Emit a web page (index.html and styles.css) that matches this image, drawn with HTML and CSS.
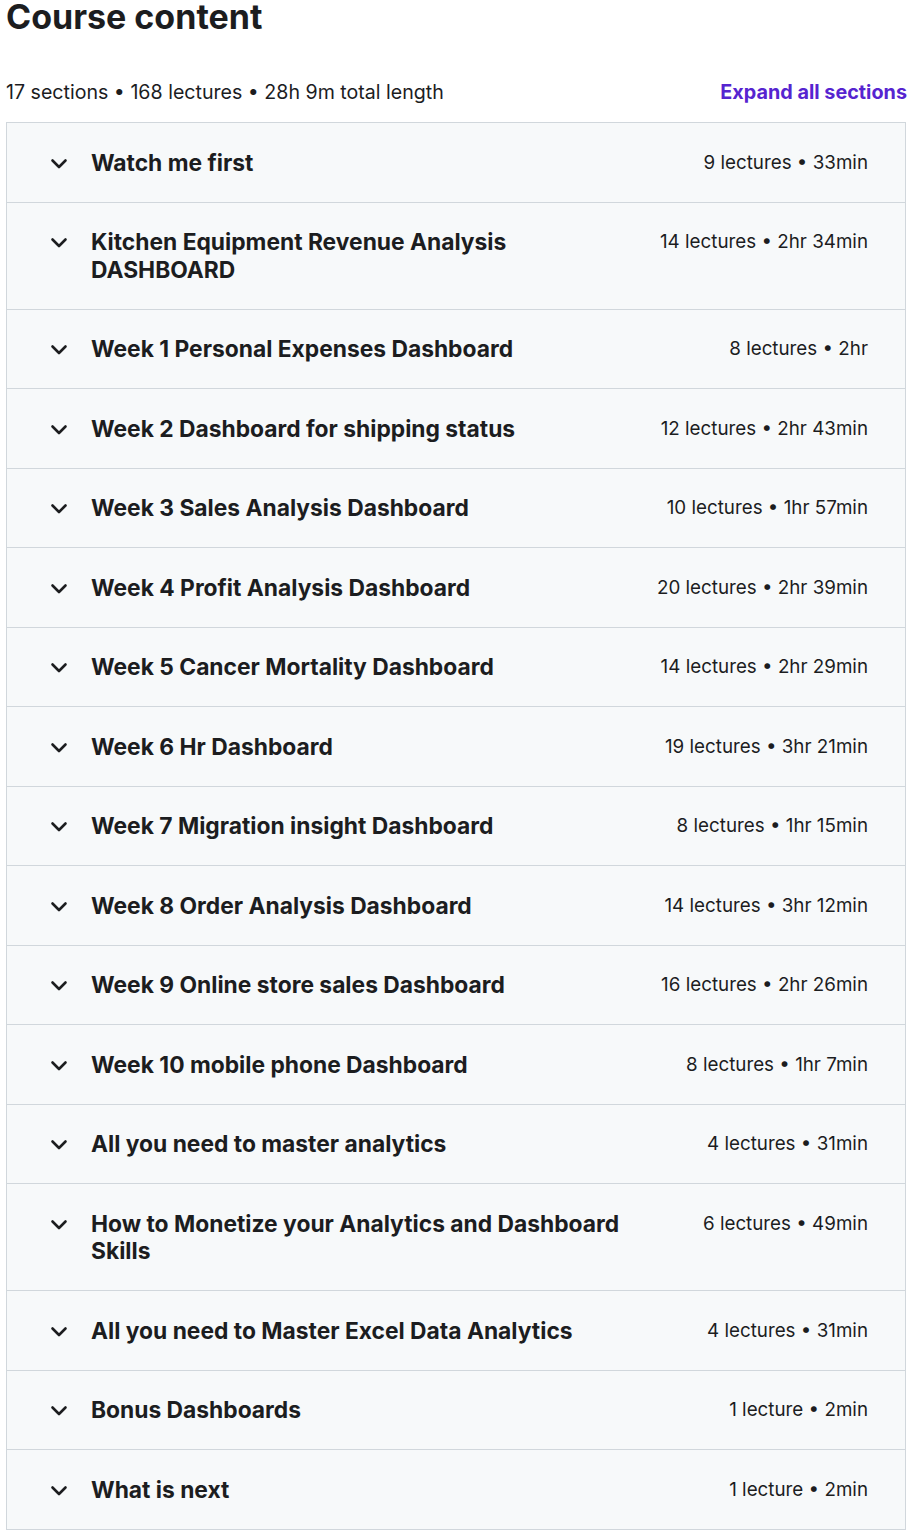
FILE: index.html
```html
<!DOCTYPE html>
<html lang="en">
<head>
<meta charset="utf-8">
<title>Course content</title>
<link rel="stylesheet" href="styles.css">
</head>
<body>
<div class="course">
  <h2 class="title">Course content</h2>
  <div class="summary">
    <span class="stats">17 sections • 168 lectures • 28h 9m total length</span>
    <button class="expand">Expand all sections</button>
  </div>
  <div class="sections">
    <div class="row"><svg class="chev" viewBox="0 0 24 24"><path d="M5.5 9.5l6.5 6.5 6.5-6.5"/></svg><span class="name">Watch me first</span><span class="meta">9 lectures • 33min</span></div>
    <div class="row"><svg class="chev" viewBox="0 0 24 24"><path d="M5.5 9.5l6.5 6.5 6.5-6.5"/></svg><span class="name">Kitchen Equipment Revenue Analysis DASHBOARD</span><span class="meta">14 lectures • 2hr 34min</span></div>
    <div class="row"><svg class="chev" viewBox="0 0 24 24"><path d="M5.5 9.5l6.5 6.5 6.5-6.5"/></svg><span class="name">Week 1 Personal Expenses Dashboard</span><span class="meta">8 lectures • 2hr</span></div>
    <div class="row"><svg class="chev" viewBox="0 0 24 24"><path d="M5.5 9.5l6.5 6.5 6.5-6.5"/></svg><span class="name">Week 2 Dashboard for shipping status</span><span class="meta">12 lectures • 2hr 43min</span></div>
    <div class="row"><svg class="chev" viewBox="0 0 24 24"><path d="M5.5 9.5l6.5 6.5 6.5-6.5"/></svg><span class="name">Week 3 Sales Analysis Dashboard</span><span class="meta">10 lectures • 1hr 57min</span></div>
    <div class="row"><svg class="chev" viewBox="0 0 24 24"><path d="M5.5 9.5l6.5 6.5 6.5-6.5"/></svg><span class="name">Week 4 Profit Analysis Dashboard</span><span class="meta">20 lectures • 2hr 39min</span></div>
    <div class="row"><svg class="chev" viewBox="0 0 24 24"><path d="M5.5 9.5l6.5 6.5 6.5-6.5"/></svg><span class="name">Week 5 Cancer Mortality Dashboard</span><span class="meta">14 lectures • 2hr 29min</span></div>
    <div class="row"><svg class="chev" viewBox="0 0 24 24"><path d="M5.5 9.5l6.5 6.5 6.5-6.5"/></svg><span class="name">Week 6 Hr Dashboard</span><span class="meta">19 lectures • 3hr 21min</span></div>
    <div class="row"><svg class="chev" viewBox="0 0 24 24"><path d="M5.5 9.5l6.5 6.5 6.5-6.5"/></svg><span class="name">Week 7 Migration insight Dashboard</span><span class="meta">8 lectures • 1hr 15min</span></div>
    <div class="row"><svg class="chev" viewBox="0 0 24 24"><path d="M5.5 9.5l6.5 6.5 6.5-6.5"/></svg><span class="name">Week 8 Order Analysis Dashboard</span><span class="meta">14 lectures • 3hr 12min</span></div>
    <div class="row"><svg class="chev" viewBox="0 0 24 24"><path d="M5.5 9.5l6.5 6.5 6.5-6.5"/></svg><span class="name">Week 9 Online store sales Dashboard</span><span class="meta">16 lectures • 2hr 26min</span></div>
    <div class="row"><svg class="chev" viewBox="0 0 24 24"><path d="M5.5 9.5l6.5 6.5 6.5-6.5"/></svg><span class="name">Week 10 mobile phone Dashboard</span><span class="meta">8 lectures • 1hr 7min</span></div>
    <div class="row"><svg class="chev" viewBox="0 0 24 24"><path d="M5.5 9.5l6.5 6.5 6.5-6.5"/></svg><span class="name">All you need to master analytics</span><span class="meta">4 lectures • 31min</span></div>
    <div class="row"><svg class="chev" viewBox="0 0 24 24"><path d="M5.5 9.5l6.5 6.5 6.5-6.5"/></svg><span class="name">How to Monetize your Analytics and Dashboard Skills</span><span class="meta">6 lectures • 49min</span></div>
    <div class="row"><svg class="chev" viewBox="0 0 24 24"><path d="M5.5 9.5l6.5 6.5 6.5-6.5"/></svg><span class="name">All you need to Master Excel Data Analytics</span><span class="meta">4 lectures • 31min</span></div>
    <div class="row"><svg class="chev" viewBox="0 0 24 24"><path d="M5.5 9.5l6.5 6.5 6.5-6.5"/></svg><span class="name">Bonus Dashboards</span><span class="meta">1 lecture • 2min</span></div>
    <div class="row"><svg class="chev" viewBox="0 0 24 24"><path d="M5.5 9.5l6.5 6.5 6.5-6.5"/></svg><span class="name">What is next</span><span class="meta">1 lecture • 2min</span></div>
  </div>
</div>
</body>
</html>
```
FILE: styles.css
```css
html, body {
  margin: 0;
  padding: 0;
  background: #ffffff;
}
body {
  font-family: Inter, "Liberation Sans", sans-serif;
  color: #1c1d1f;
}
.course {
  width: 900px;
  margin-left: 6px;
}
.title {
  margin: 0;
  font-size: 34px;
  line-height: 34px;
  font-weight: 700;
  color: #1c1d1f;
}
.summary {
  display: flex;
  justify-content: space-between;
  align-items: center;
  margin-top: 44px;
  height: 28px;
}
.stats {
  font-size: 19.6px;
  color: #1c1d1f;
}
.expand {
  border: 0;
  background: none;
  padding: 0;
  font-family: inherit;
  font-size: 19.8px;
  font-weight: 700;
  color: #5624d0;
  margin-right: -1px;
}
.sections {
  margin-top: 16px;
  border: 1px solid #d1d7dc;
  border-bottom: 0;
}
.row {
  display: flex;
  align-items: flex-start;
  background: #f7f9fa;
  border-bottom: 1px solid #d1d7dc;
  padding: 25.5px 37px 25.5px 40px;
}
.chev {
  width: 24px;
  height: 24px;
  flex: none;
  margin-top: 2px;
  fill: none;
  stroke: #1c1d1f;
  stroke-width: 2.6;
  stroke-linecap: round;
  stroke-linejoin: round;
}
.name {
  flex: 1;
  margin-left: 20px;
  font-size: 22.8px;
  line-height: 27.5px;
  font-weight: 700;
}
.meta {
  flex: none;
  margin-left: 48px;
  font-size: 18.8px;
  line-height: 27.5px;
}
```
